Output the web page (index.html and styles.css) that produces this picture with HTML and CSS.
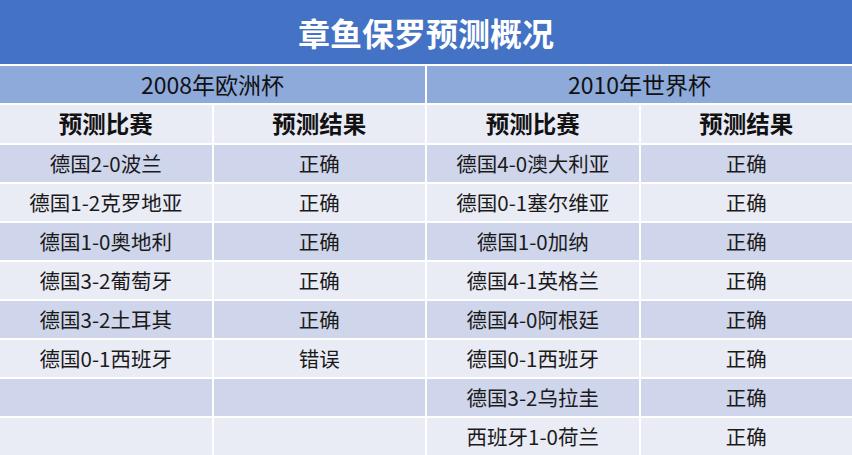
FILE: index.html
```html
<!DOCTYPE html>
<html lang="zh-CN">
<head>
<meta charset="utf-8">
<title>章鱼保罗预测概况</title>
<link rel="stylesheet" href="styles.css">
</head>
<body>
<div class="title">章鱼保罗预测概况</div>
<div class="grid">
  <div class="cell sub span2">2008年欧洲杯</div>
  <div class="cell sub span2">2010年世界杯</div>

  <div class="cell head">预测比赛</div>
  <div class="cell head">预测结果</div>
  <div class="cell head">预测比赛</div>
  <div class="cell head">预测结果</div>

  <div class="cell dark">德国2-0波兰</div><div class="cell dark">正确</div><div class="cell dark">德国4-0澳大利亚</div><div class="cell dark">正确</div>
  <div class="cell light">德国1-2克罗地亚</div><div class="cell light">正确</div><div class="cell light">德国0-1塞尔维亚</div><div class="cell light">正确</div>
  <div class="cell dark">德国1-0奥地利</div><div class="cell dark">正确</div><div class="cell dark">德国1-0加纳</div><div class="cell dark">正确</div>
  <div class="cell light">德国3-2葡萄牙</div><div class="cell light">正确</div><div class="cell light">德国4-1英格兰</div><div class="cell light">正确</div>
  <div class="cell dark">德国3-2土耳其</div><div class="cell dark">正确</div><div class="cell dark">德国4-0阿根廷</div><div class="cell dark">正确</div>
  <div class="cell light">德国0-1西班牙</div><div class="cell light">错误</div><div class="cell light">德国0-1西班牙</div><div class="cell light">正确</div>
  <div class="cell dark"></div><div class="cell dark"></div><div class="cell dark">德国3-2乌拉圭</div><div class="cell dark">正确</div>
  <div class="cell light"></div><div class="cell light"></div><div class="cell light">西班牙1-0荷兰</div><div class="cell light">正确</div>
</div>
</body>
</html>
```

FILE: styles.css
```css
html, body {
  margin: 0;
  padding: 0;
  background: #ffffff;
}
body {
  font-family: "Noto Sans CJK SC", "Noto Sans", sans-serif;
  color: #1a1a1a;
}
.title {
  height: 64px;
  background: #4472c4;
  color: #ffffff;
  font-size: 32px;
  font-weight: bold;
  display: flex;
  align-items: center;
  justify-content: center;
}
.grid {
  margin-top: 2px;
  display: grid;
  grid-template-columns: repeat(4, 1fr);
  column-gap: 2px;
  row-gap: 2px;
}
.cell {
  height: 37px;
  display: flex;
  align-items: center;
  justify-content: center;
  font-size: 20.5px;
  line-height: 1;
}
.span2 {
  grid-column: span 2;
}
.sub {
  background: #8eaadb;
  font-family: "Noto Sans CJK SC", sans-serif;
  font-size: 23px;
  color: #111111;
}
.head {
  height: 38px;
  background: #e9ebf5;
  font-size: 23.5px;
  font-weight: bold;
  color: #111111;
}
.dark {
  background: #cfd5ea;
}
.light {
  background: #e9ebf5;
}
```
